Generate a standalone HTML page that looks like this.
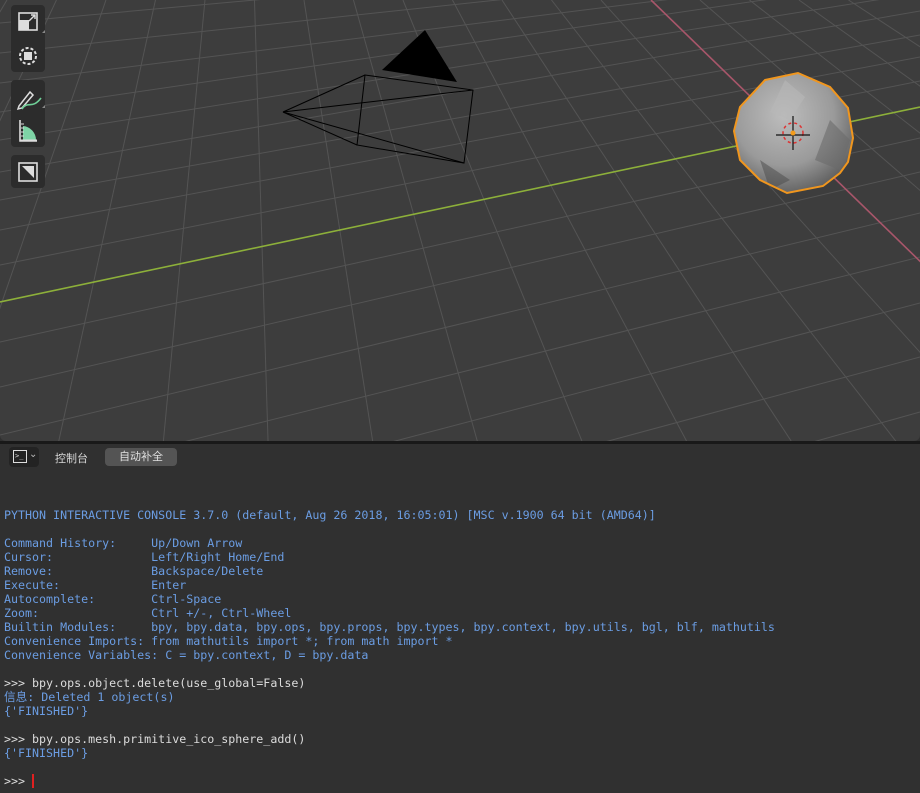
<!DOCTYPE html>
<html><head><meta charset="utf-8"><style>
*{margin:0;padding:0;box-sizing:border-box}
body{width:920px;height:793px;overflow:hidden;background:#303030;position:relative;font-family:"Liberation Sans","Noto Sans CJK SC",sans-serif}
#vp{position:absolute;left:0;top:0;width:920px;height:441px;background:#3d3d3d;overflow:hidden;border-radius:0 0 6px 6px}
.tb{position:absolute;left:11px;width:34px;background:#2c2c2c;border-radius:4px}
#sep{position:absolute;left:0;top:441px;width:920px;height:3px;background:#191919}
#hdr{position:absolute;left:0;top:444px;width:920px;height:26px;background:#303030;border-radius:6px 6px 0 0}
#con{position:absolute;left:4px;top:508px;font-family:"DejaVu Sans Mono","Liberation Mono","Noto Sans CJK SC",monospace;font-size:11.65px;line-height:14px;color:#6b9de3;white-space:pre}
.w{color:#dcdcdc}
</style></head><body>
<div id="vp">
<svg id="g" width="920" height="441" style="position:absolute;left:0;top:0"></svg>
<div class="tb" style="top:5px;height:67px"></div>
<div class="tb" style="top:80px;height:67px"></div>
<div class="tb" style="top:155px;height:33px"></div>
<svg width="60" height="200" style="position:absolute;left:0;top:0">
<rect x="19" y="13" width="18" height="17" fill="none" stroke="#ddd" stroke-width="1.6"/>
<rect x="19" y="20" width="10" height="10" fill="#ddd"/>
<path d="M29 21 L35 15 M31 15 H35 V19" stroke="#ddd" stroke-width="1.4" fill="none"/>
<path d="M42 33 L45 33 L45 30Z" fill="#888"/>
<circle cx="28" cy="56" r="8" fill="none" stroke="#ddd" stroke-width="2" stroke-dasharray="3 2"/>
<rect x="24" y="52" width="8" height="8" fill="#ddd"/>
<path d="M19 106 L30 92 L33 95 L22 108 L18 109Z" fill="none" stroke="#ddd" stroke-width="1.5"/>
<path d="M22 109 C28 100 32 110 41 98" stroke="#6fcf97" stroke-width="1.6" fill="none"/>
<path d="M42 108 L45 108 L45 105Z" fill="#888"/>
<path d="M20 120 V141 H37" stroke="#ddd" stroke-width="1.6" fill="none"/>
<path d="M23 140 V126 A14 14 0 0 1 36 140Z" fill="#7ed4a6"/>
<path d="M20 140 H37 M21 124 H24 M21 128 H24 M21 132 H24 M21 136 H24" stroke="#ddd" stroke-width="1"/>
<rect x="19" y="163" width="18" height="18" fill="none" stroke="#ddd" stroke-width="1.6"/>
<path d="M22 166 H34 V178Z" fill="#ddd"/>
</svg>
</div>
<div id="sep"></div>
<div id="hdr">
<div style="position:absolute;left:9px;top:3px;width:30px;height:20px;background:#232323;border-radius:4px"></div>
<div style="position:absolute;left:13px;top:6px;width:14px;height:13px;border:1px solid #ddd;color:#ddd;font-size:7px;line-height:10px;padding-left:1px;font-family:'DejaVu Sans Mono',monospace">&gt;_</div>
<div style="position:absolute;left:29px;top:5px;color:#bbb;font-size:10px">⌄</div>
<div style="position:absolute;left:55px;top:6px;color:#d6d6d6;font-size:11px">控制台</div>
<div style="position:absolute;left:105px;top:4px;width:72px;height:18px;background:#545454;border-radius:4px;color:#e0e0e0;font-size:11px;line-height:18px;text-align:center">自动补全</div>
</div>
<div id="con">PYTHON INTERACTIVE CONSOLE 3.7.0 (default, Aug 26 2018, 16:05:01) [MSC v.1900 64 bit (AMD64)]

Command History:     Up/Down Arrow
Cursor:              Left/Right Home/End
Remove:              Backspace/Delete
Execute:             Enter
Autocomplete:        Ctrl-Space
Zoom:                Ctrl +/-, Ctrl-Wheel
Builtin Modules:     bpy, bpy.data, bpy.ops, bpy.props, bpy.types, bpy.context, bpy.utils, bgl, blf, mathutils
Convenience Imports: from mathutils import *; from math import *
Convenience Variables: C = bpy.context, D = bpy.data

<span class="w">&gt;&gt;&gt; bpy.ops.object.delete(use_global=False)</span>
信息: Deleted 1 object(s)
{'FINISHED'}

<span class="w">&gt;&gt;&gt; bpy.ops.mesh.primitive_ico_sphere_add()</span>
{'FINISHED'}

<span class="w">&gt;&gt;&gt; </span><span style="display:inline-block;width:2px;height:14px;background:#e02020;vertical-align:top"></span></div>
<script>
var s='',L='#545454';
for(var k=-6;k<=14;k++){var xt=116+72*k,xb=59+104.5*k;var f=function(y){return xt+(xb-xt)*(y-180)/260};
 if(k!=10)s+='<line x1="'+f(0)+'" y1="0" x2="'+f(441)+'" y2="441" stroke="'+L+'" stroke-width="1"/>';}
var P=[[-6,-75],[23,-60],[53,-45],[83,-32],[112,-23],[140,-7],[172,11],[200,35],[230,57],[265,81],[342,138],[387,172],[435,213],[488,257],[545,303],[605,357],[670,412],[740,470]];
P.forEach(function(p){s+='<line x1="0" y1="'+p[0]+'" x2="920" y2="'+p[1]+'" stroke="'+L+'"/>'});
s+='<line x1="0" y1="302" x2="920" y2="107" stroke="#8db03a" stroke-width="1.6"/>';
s+='<line x1="651" y1="0" x2="1104" y2="440" stroke="#a8566a" stroke-width="1.6"/>';
s+='<polygon points="382,70 425,30 457,82" fill="#000"/>';
s+='<g stroke="#000" stroke-width="1" fill="none"><polygon points="365,75 473,90 464,163 357,145"/><line x1="283" y1="112" x2="365" y2="75"/><line x1="283" y1="112" x2="473" y2="90"/><line x1="283" y1="112" x2="464" y2="163"/><line x1="283" y1="112" x2="357" y2="145"/></g>';
s+='<defs><radialGradient id="sg" cx="0.42" cy="0.35" r="0.7"><stop offset="0" stop-color="#bdbdbd"/><stop offset="0.6" stop-color="#9a9a9a"/><stop offset="1" stop-color="#5a5a5a"/></radialGradient></defs>';
var pts="765,80 798,73 830,87 848,108 853,138 848,162 840,173 823,186 787,193 760,180 740,160 734,131 740,107";
s+='<polygon points="'+pts+'" fill="url(#sg)"/>';
s+='<polygon points="785,80 805,97 790,120 770,112" fill="#b8b8b8" opacity=".6"/><polygon points="760,160 790,180 770,190" fill="#4a4a4a" opacity=".5"/><polygon points="830,120 850,140 840,170 815,160" fill="#6a6a6a" opacity=".6"/>';
s+='<polygon points="'+pts+'" fill="none" stroke="#f0961e" stroke-width="2"/>';
s+='<circle cx="793" cy="133" r="10" fill="none" stroke="#d33" stroke-width="1.5" stroke-dasharray="3 3"/><path d="M793 116v34M776 135h34" stroke="#111" stroke-width="1.2"/><circle cx="793" cy="133" r="2.5" fill="#f39c1c"/>';
document.getElementById('g').innerHTML=s;
</script>
</body></html>
